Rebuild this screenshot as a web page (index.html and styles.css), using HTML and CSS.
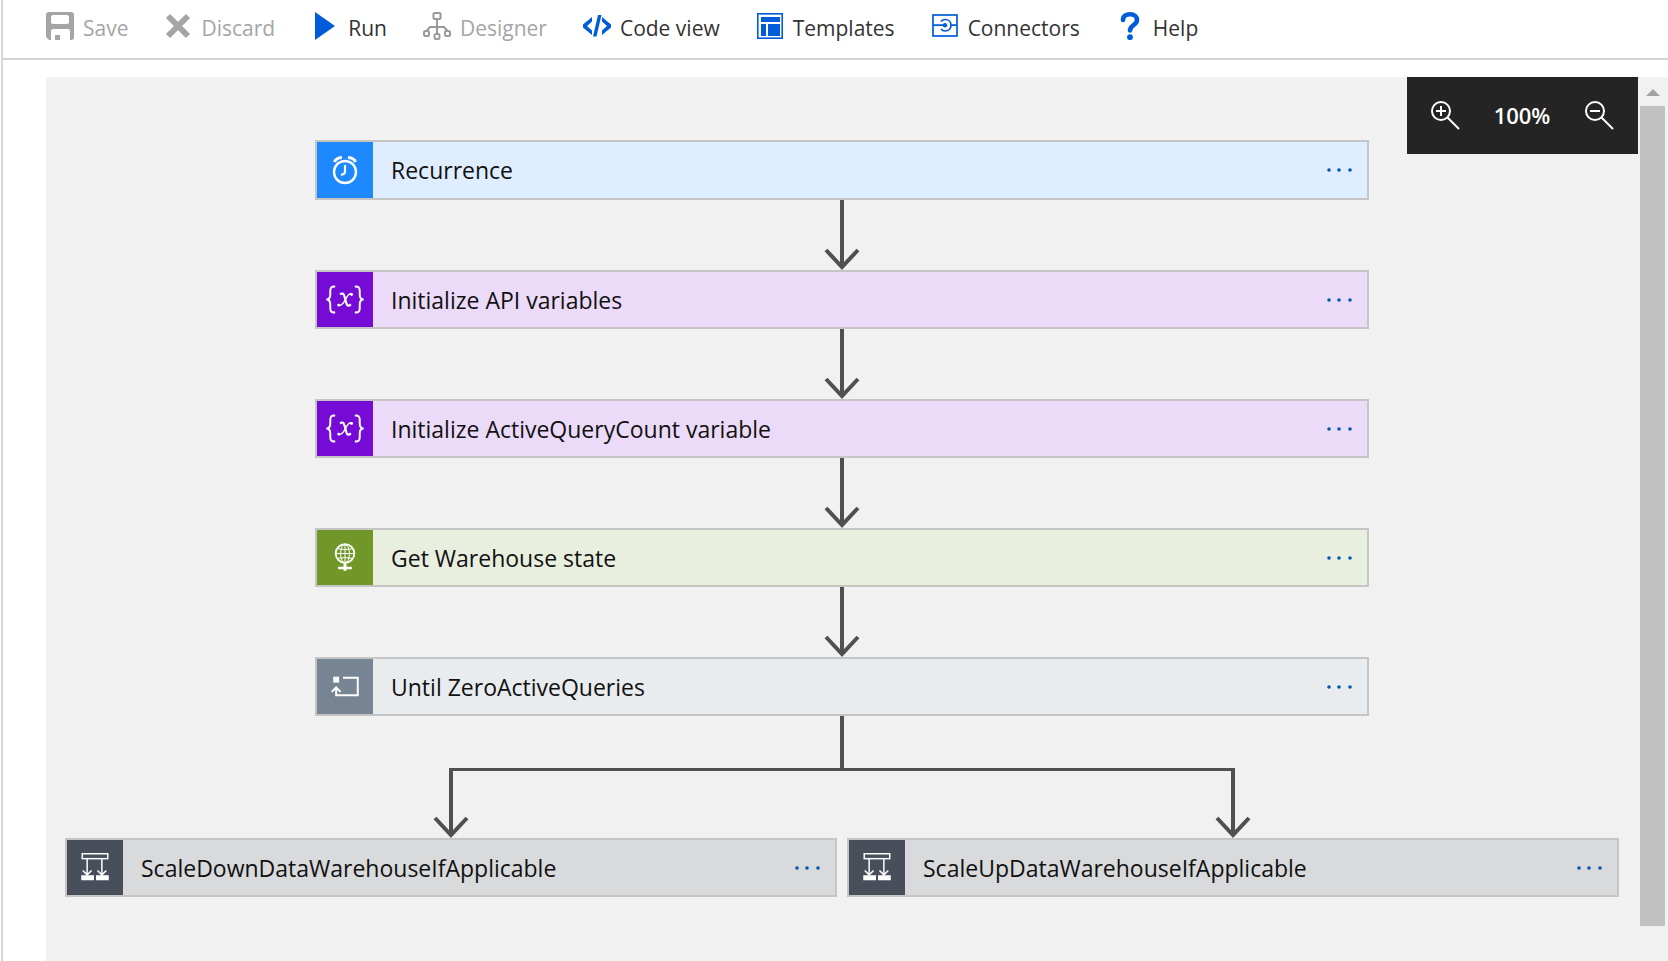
FILE: index.html
```html
<!DOCTYPE html>
<html lang="en">
<head>
<meta charset="utf-8">
<title>Logic app designer</title>
<link rel="stylesheet" href="styles.css">
</head>
<body>
<svg class="defs" aria-hidden="true">
  <symbol id="dots" viewBox="0 0 26 6"><circle cx="3" cy="3" r="1.800"/><circle cx="13" cy="3" r="1.800"/><circle cx="24" cy="3" r="1.800"/></symbol>
  <symbol id="arrow" viewBox="0 0 36 70"><path d="M18 0V66M2 50L18 67L34 50" fill="none" stroke="#505050" stroke-width="4"/></symbol>
  <symbol id="variable" viewBox="0 0 56 56">
    <g fill="none" stroke="#fff" stroke-width="2">
      <path d="M18 15Q13 14 13 19V23Q13 28 9 28Q13 28 13 33V37Q13 42 18 41"/>
      <path d="M38 15Q43 14 43 19V23Q43 28 47 28Q43 28 43 33V37Q43 42 38 41"/>
      <path d="M23 23Q26 20 27.500 25L29.500 32Q30.500 36 34 33" stroke-width="2.200"/>
      <path d="M35 22.500Q32 21 29 27Q25 35.500 21 34" stroke-width="1.500"/>
    </g>
    <circle cx="34.700" cy="23" r="1.500" fill="#fff"/><circle cx="21.600" cy="33.700" r="1.500" fill="#fff"/>
  </symbol>
  <symbol id="scope" viewBox="0 1 56 56">
    <g fill="none" stroke="#fff" stroke-width="1.500">
      <rect x="15" y="15" width="26" height="5"/>
      <path d="M20 20V36M35 20V36M15.500 32L20 36.500L24.500 32M30.500 32L35 36.500L39.500 32"/>
    </g>
    <path d="M14 37h13v5H14zM29 37h13v5H29z" fill="#fff"/>
  </symbol>
</svg>

<header class="toolbar">
  <button class="command" disabled>
    <svg class="command-icon" viewBox="0 0 28 28"><path fill="#a5a5a5" fill-rule="evenodd" d="M3 0H25Q28 0 28 3V25Q28 28 25 28H24V19Q24 17 22 17H7Q5 17 5 19V28H3L0 25V3Q0 0 3 0ZM7 3Q5 3 5 5V10Q5 12 7 12H21Q23 12 23 10V5Q23 3 21 3Z"/><path fill="#a5a5a5" d="M9 23h5v5H9z"/></svg>
    <span>Save</span>
  </button>
  <button class="command" disabled>
    <svg class="command-icon" viewBox="0 0 28 28"><path d="M4 4L24 24M24 4L4 24" stroke="#a5a5a5" stroke-width="6"/></svg>
    <span>Discard</span>
  </button>
  <button class="command">
    <svg class="command-icon" viewBox="0 0 28 28"><path fill="#015cda" d="M4 0L24 14L4 28Z"/></svg>
    <span>Run</span>
  </button>
  <button class="command" disabled>
    <svg class="command-icon" viewBox="0 0 28 28"><g fill="none" stroke="#999" stroke-width="2"><rect x="10.500" y="1" width="7" height="6" rx="1"/><path d="M14 7V21M3.500 19L7 15H21L24.500 19"/><rect x="1" y="19" width="5" height="5" rx="1.500"/><rect x="11.500" y="22" width="5" height="5" rx="1.500"/><rect x="22" y="19" width="5" height="5" rx="1.500"/></g></svg>
    <span>Designer</span>
  </button>
  <button class="command">
    <svg class="command-icon" viewBox="0 0 28 28"><path fill="#015cda" d="M15 3h3.500L13.500 24.500H10zM9 5V9.500L4 14L9 18.500V23L0 15.500V12.500zM19 5V9.500L24 14L19 18.500V23L28 15.500V12.500z"/></svg>
    <span>Code view</span>
  </button>
  <button class="command">
    <svg class="command-icon" viewBox="0 0 28 28"><rect x="1.800" y="1.800" width="24.400" height="24.400" fill="none" stroke="#015cda" stroke-width="1.600"/><path fill="#015cda" d="M5 5H24V10H5zM5 12H10V24H5zM12 12H24V24H12z"/></svg>
    <span>Templates</span>
  </button>
  <button class="command">
    <svg class="command-icon" viewBox="0 0 28 28"><g fill="none" stroke="#015cda" stroke-width="1.700"><rect x="2" y="3" width="24" height="21"/><path d="M2 13.200H14M19.500 13.200H26M10 9.500Q11.500 7.500 14 7.500C22 7.500 22 19 14 19Q11.500 19 10 17"/></g><circle cx="14" cy="13.200" r="2.200" fill="#015cda"/></svg>
    <span>Connectors</span>
  </button>
  <button class="command">
    <svg class="command-icon" viewBox="0 0 28 28"><path d="M7 8C7 4 10 2.300 14 2.300C18.500 2.300 21 4.800 21 8C21 13 14 13 14 18.500" fill="none" stroke="#015cda" stroke-width="4.600" stroke-linecap="round"/><circle cx="14" cy="25.200" r="2.900" fill="#015cda"/></svg>
    <span>Help</span>
  </button>
</header>

<main class="workspace">
  <section class="canvas">
    <div class="zoom-bar">
      <button class="zoom-button" aria-label="Zoom in"><svg class="zoom-icon" viewBox="0 0 30 30"><g fill="none" stroke="#fff" stroke-width="2"><circle cx="11" cy="11" r="9"/><path d="M17.500 17.500L29 29M6 11H16M11 6V16"/></g></svg></button>
      <span class="zoom-level">100%</span>
      <button class="zoom-button" aria-label="Zoom out"><svg class="zoom-icon" viewBox="0 0 30 30"><g fill="none" stroke="#fff" stroke-width="2"><circle cx="11" cy="11" r="9"/><path d="M17.500 17.500L29 29M6 11H16"/></g></svg></button>
    </div>

    <div class="flow">
      <article class="card trigger">
        <svg class="card-icon" viewBox="0 0 56 56"><g fill="none" stroke="#fff"><circle cx="28" cy="30" r="11" stroke-width="2.400"/><path d="M28 23V30Q28 32 24 33" stroke-width="2.200"/><path d="M17.500 20Q19 16 25 15.500M38.500 20Q37 16 31 15.500" stroke-width="3.200"/></g></svg>
        <h2 class="card-title">Recurrence</h2>
        <button class="card-menu" aria-label="Recurrence menu"><svg class="dots"><use href="#dots"/></svg></button>
      </article>
      <svg class="connector"><use href="#arrow"/></svg>
      <article class="card variable">
        <svg class="card-icon"><use href="#variable"/></svg>
        <h2 class="card-title">Initialize API variables</h2>
        <button class="card-menu" aria-label="Initialize API variables menu"><svg class="dots"><use href="#dots"/></svg></button>
      </article>
      <svg class="connector"><use href="#arrow"/></svg>
      <article class="card variable">
        <svg class="card-icon"><use href="#variable"/></svg>
        <h2 class="card-title">Initialize ActiveQueryCount variable</h2>
        <button class="card-menu" aria-label="Initialize ActiveQueryCount variable menu"><svg class="dots"><use href="#dots"/></svg></button>
      </article>
      <svg class="connector"><use href="#arrow"/></svg>
      <article class="card http">
        <svg class="card-icon" viewBox="0 0 56 56"><g fill="none" stroke="#fff"><circle cx="28" cy="24" r="9.500" stroke-width="1.800"/><ellipse cx="28" cy="24" rx="4.500" ry="9.500"/><path d="M28 14.500V33.500M18.500 24H37.500M20 19Q28 21 36 19M20 29Q28 27 36 29"/></g><path d="M26.500 34h3v3.500h5.500v2.500h-5.500v1.500h-3v-1.500h-5.500v-2.500h5.500z" fill="#fff"/></svg>
        <h2 class="card-title">Get Warehouse state</h2>
        <button class="card-menu" aria-label="Get Warehouse state menu"><svg class="dots"><use href="#dots"/></svg></button>
      </article>
      <svg class="connector"><use href="#arrow"/></svg>
      <article class="card until">
        <svg class="card-icon" viewBox="0 0 56 56"><path d="M26 19H41V37H19V29M14.500 33.500L19 29L23.500 33.500" fill="none" stroke="#fff" stroke-width="2"/><path d="M16 18h6v6h-6z" fill="#fff"/></svg>
        <h2 class="card-title">Until ZeroActiveQueries</h2>
        <button class="card-menu" aria-label="Until ZeroActiveQueries menu"><svg class="dots"><use href="#dots"/></svg></button>
      </article>
    </div>

    <div class="stem"></div>
    <div class="branches">
      <div class="branch">
        <div class="elbow elbow-left"></div>
        <svg class="connector"><use href="#arrow"/></svg>
        <article class="card scope">
          <svg class="card-icon"><use href="#scope"/></svg>
          <h2 class="card-title">ScaleDownDataWarehouseIfApplicable</h2>
          <button class="card-menu" aria-label="ScaleDownDataWarehouseIfApplicable menu"><svg class="dots"><use href="#dots"/></svg></button>
        </article>
      </div>
      <div class="branch">
        <div class="elbow elbow-right"></div>
        <svg class="connector"><use href="#arrow"/></svg>
        <article class="card scope">
          <svg class="card-icon"><use href="#scope"/></svg>
          <h2 class="card-title">ScaleUpDataWarehouseIfApplicable</h2>
          <button class="card-menu" aria-label="ScaleUpDataWarehouseIfApplicable menu"><svg class="dots"><use href="#dots"/></svg></button>
        </article>
      </div>
    </div>
  </section>
  <div class="scrollbar" aria-hidden="true">
    <svg class="scroll-arrow" viewBox="0 0 14 7"><path d="M7 0L14 7H0z" fill="#a3a3a3"/></svg>
    <div class="scroll-thumb"></div>
  </div>
</main>
</body>
</html>
```
FILE: styles.css
```css
* {
  box-sizing: border-box;
}

body {
  margin: 0 0 0 1px;
  height: 100vh;
  overflow: hidden;
  display: flex;
  flex-direction: column;
  border-left: 2px solid #d8d8d8;
  background: #fff;
  color: #333;
  font-family: "Segoe UI", "Open Sans", "Noto Sans", sans-serif;
}

button {
  margin: 0;
  padding: 0;
  border: 0;
  background: none;
  color: inherit;
  font: inherit;
}

.defs {
  display: none;
}

.toolbar {
  display: flex;
  gap: 36px;
  height: 60px;
  flex: none;
  padding: 10px 43px 0;
  border-bottom: 2px solid #d4d4d4;
}

.command {
  display: flex;
  align-items: flex-start;
  gap: 9px;
  font-size: 21px;
  line-height: 37px;
  white-space: nowrap;
}

.command:disabled {
  color: #a5a5a5;
}

.command-icon {
  width: 28px;
  height: 28px;
  margin-top: 2px;
}

.workspace {
  flex: 1;
  min-height: 0;
  display: flex;
  padding: 17px 0 0 43px;
}

.canvas {
  position: relative;
  flex: 1;
  padding: 63px 19px 0;
  overflow: hidden;
  background: #f1f1f1;
}

.zoom-bar {
  position: absolute;
  top: 0;
  right: 0;
  display: flex;
  align-items: center;
  justify-content: space-between;
  width: 231px;
  height: 77px;
  padding: 0 24px 1px 23px;
  background: #242424;
  color: #fff;
}

.zoom-icon {
  display: block;
  width: 30px;
  height: 30px;
}

.zoom-level {
  font-size: 22px;
  font-weight: 600;
}

.flow {
  display: flex;
  flex-direction: column;
  align-items: center;
}

.flow .card {
  max-width: 1054px;
}

.card {
  display: flex;
  align-items: center;
  width: 100%;
  height: 59px;
  border: 2px solid #c5c5c5;
}

.card-icon {
  flex: none;
  width: 56px;
  height: 100%;
}

.card-title {
  flex: 1;
  margin: 0;
  padding-left: 18px;
  color: #111;
  font-size: 23px;
  font-weight: 400;
  line-height: 32px;
  white-space: nowrap;
}

.card-menu {
  padding: 15px 15px 15px 14px;
}

.dots {
  display: block;
  width: 26px;
  height: 6px;
  fill: #0058ad;
}

.trigger {
  height: 60px;
  background: #deedff;
}

.trigger .card-icon {
  background: #1e88ff;
}

.variable {
  background: #ebdbf8;
}

.variable .card-icon {
  background: #770bd6;
}

.http {
  background: #e9efdf;
}

.http .card-icon {
  background: #709727;
}

.until {
  background: #e8ecef;
}

.until .card-icon {
  background: #768493;
}

.scope {
  background: #d9dadc;
}

.scope .card-icon {
  background: #484f5a;
}

.connector {
  display: block;
  width: 36px;
  height: 70px;
}

.stem {
  width: 4px;
  height: 52px;
  margin: 0 auto;
  background: #505050;
}

.branches {
  display: grid;
  grid-template-columns: 1fr 1fr;
  gap: 10px;
}

.branch {
  display: flex;
  flex-direction: column;
  align-items: center;
}

.elbow {
  width: calc(50% + 7px);
  height: 3px;
  margin-bottom: -3px;
  background: #505050;
}

.elbow-left {
  align-self: flex-end;
  margin-right: -5px;
}

.elbow-right {
  align-self: flex-start;
  margin-left: -5px;
}

.scrollbar {
  flex: none;
  width: 30px;
  padding: 12px 3px 35px 2px;
  display: flex;
  flex-direction: column;
  align-items: center;
  gap: 10px;
  background: #f1f1f1;
}

.scroll-arrow {
  flex: none;
  width: 14px;
  height: 7px;
}

.scroll-thumb {
  flex: 1;
  width: 100%;
  background: #c1c1c1;
}
```
